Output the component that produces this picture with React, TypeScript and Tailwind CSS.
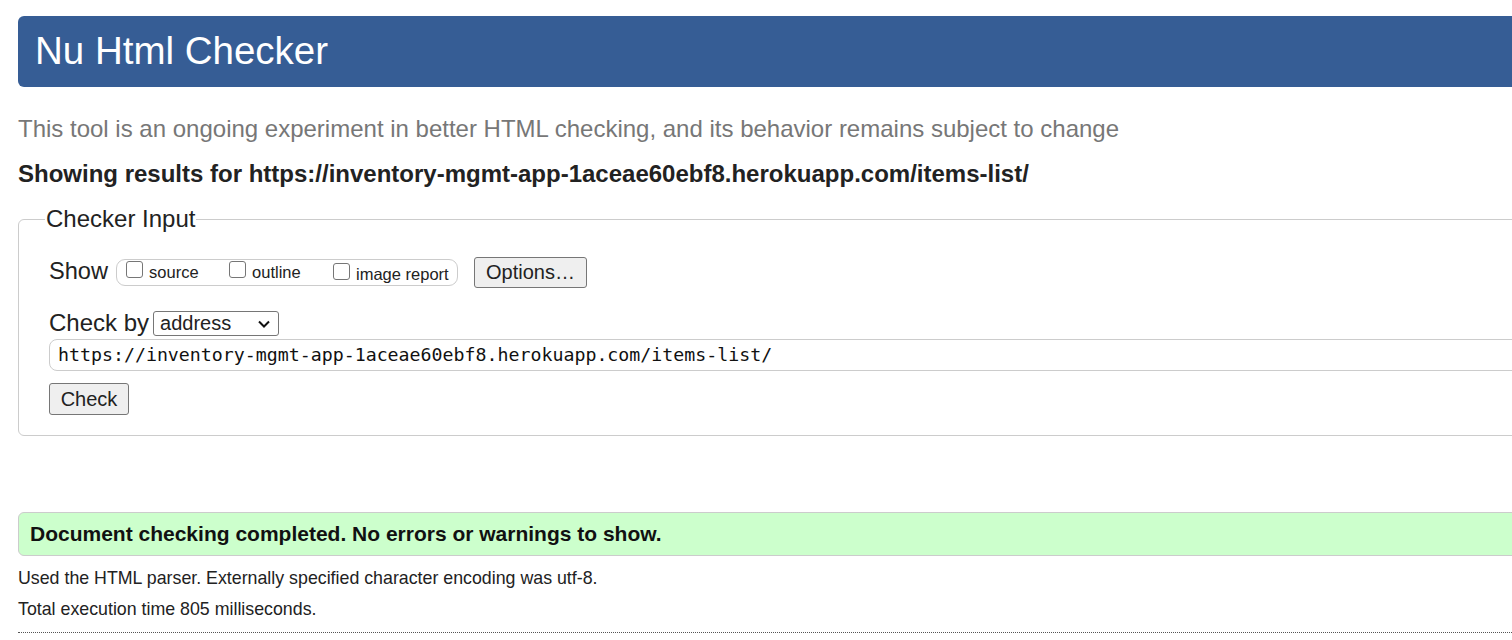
import React from "react";

function Box({ label }: { label: string }) {
  return (
    <span className="inline-flex items-center">
      <span className="inline-block w-[17px] h-[17px] border border-[#767676] rounded-[3px] bg-white mr-[6px] relative top-[-1px]" />
      <span className="text-[16.5px] text-[#222] relative top-[2px]">{label}</span>
    </span>
  );
}

export default function App() {
  return (
    <div className="w-full overflow-hidden bg-white" style={{ fontFamily: '"Liberation Sans", Arial, sans-serif' }}>
      <div className="w-[1560px] pl-[18px] pt-[16px] text-[#222]">
        <div className="h-[71px] bg-[#365d95] rounded-l-[6px] flex items-center pl-[17px]">
          <h1 className="text-white text-[38.5px] leading-none">Nu Html Checker</h1>
        </div>
        <p className="mt-[29px] text-[24px] text-[#777] leading-[26px]">
          This tool is an ongoing experiment in better HTML checking, and its behavior remains subject to change
        </p>
        <p className="mt-[19px] text-[24px] font-bold text-[#222] leading-[26px]">
          Showing results for https://inventory-mgmt-app-1aceae60ebf8.herokuapp.com/items-list/
        </p>
        <fieldset className="mt-[19px] border border-[#ccc] rounded-l-[6px] pl-[30px] pb-[21px] pt-[24px] h-[230px]">
          <legend className="text-[24px] px-[1px] ml-[-4px] leading-[26px]">Checker Input</legend>
          <div className="flex items-center h-[32px]">
            <span className="text-[23.6px] mr-[8px]">Show</span>
            <span className="inline-flex items-center h-[27px] w-[342px] border border-[#ccc] rounded-[9px] pl-[9px]">
              <span className="w-[103px]"><Box label="source" /></span>
              <span className="w-[104px]"><Box label="outline" /></span>
              <Box label="image report" />
            </span>
            <button className="ml-[16px] h-[31px] w-[113px] bg-[#efefef] border border-[#767676] rounded-[3px] text-[20px] leading-none">
              Options…
            </button>
          </div>
          <div className="flex items-center mt-[22px] h-[26px]">
            <span className="text-[24px] mr-[4px]">Check by</span>
            <span className="h-[25px] w-[126px] border border-[#767676] rounded-[3px] flex items-center pl-[6px] pr-[7px] justify-between">
              <span className="text-[20px] leading-none">address</span>
              <svg width="14" height="10" viewBox="0 0 14 10" className="mt-[1px]">
                <path d="M2 2.5 L7 7.5 L12 2.5" stroke="#111" strokeWidth="2" fill="none" />
              </svg>
            </span>
          </div>
          <div className="mt-[3px] h-[32px] border border-[#ccc] rounded-l-[8px] flex items-center pl-[8px]">
            <span className="text-[18.25px] text-[#111]" style={{ fontFamily: '"DejaVu Sans Mono", monospace' }}>
              https://inventory-mgmt-app-1aceae60ebf8.herokuapp.com/items-list/
            </span>
          </div>
          <button className="mt-[12px] h-[32px] w-[80px] bg-[#efefef] border border-[#767676] rounded-[3px] text-[20px] leading-none">
            Check
          </button>
        </fieldset>
        <div className="mt-[76px] h-[44px] bg-[#ccffcc] border border-[#ccc] rounded-l-[6px] flex items-center pl-[11px]">
          <span className="text-[21px] font-bold text-[#111]">Document checking completed. No errors or warnings to show.</span>
        </div>
        <p className="mt-[12px] text-[17.8px] text-[#222] leading-[20px]">
          Used the HTML parser. Externally specified character encoding was utf-8.
        </p>
        <p className="mt-[11px] text-[17.8px] text-[#222] leading-[20px]">Total execution time 805 milliseconds.</p>
        <div className="mt-[13px] border-t border-dotted border-[#555]" />
      </div>
    </div>
  );
}
